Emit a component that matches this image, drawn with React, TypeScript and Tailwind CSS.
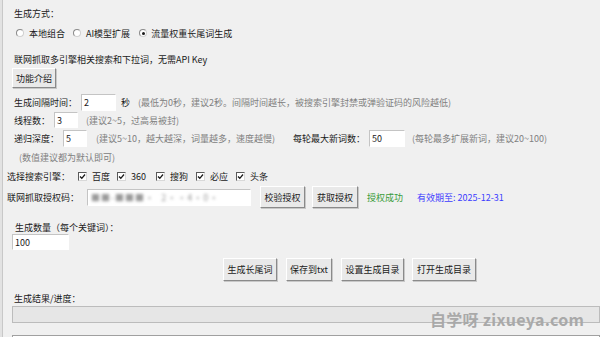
import React from "react";

const FONT = { fontFamily: '"Noto Sans CJK SC", "Noto Sans", sans-serif' };

function Radio({ checked }: { checked?: boolean }) {
  return (
    <span className="relative inline-block w-[8px] h-[8px] rounded-full bg-white border border-[#8a8a8a] border-b-[#d0d0d0] border-r-[#d0d0d0] shrink-0">
      {checked && <span className="absolute left-[2px] top-[2px] w-[3px] h-[3px] rounded-full bg-[#1a1a1a]" />}
    </span>
  );
}

function Check() {
  return (
    <span className="inline-flex items-center justify-center w-[9px] h-[9px] bg-white border border-[#5a5a5a] border-b-[#d8d8d8] border-r-[#d8d8d8] shrink-0">
      <svg width="7" height="7" viewBox="0 0 7 7">
        <path d="M1 3.5 L2.8 5.3 L6 1.5" fill="none" stroke="#1a1a1a" strokeWidth="1.3" />
      </svg>
    </span>
  );
}

function Btn({ w, h = 22, children }: { w: number; h?: number; children: React.ReactNode }) {
  return (
    <div
      className="flex items-center justify-center bg-[#e9e9e9] border border-t-white border-l-white border-r-[#8a8a8a] border-b-[#8a8a8a] shadow-[1px_1px_0_#c8c8c8] text-[9px] text-[#1a1a1a] shrink-0 whitespace-nowrap"
      style={{ width: w, height: h }}
    >
      {children}
    </div>
  );
}

function Input({ w, h = 17, value }: { w: number; h?: number; value?: string }) {
  return (
    <div
      className="flex items-center bg-white border border-[#c4c4c4] border-b-white border-r-white pl-[2px] text-[9px] text-[#1a1a1a] shrink-0"
      style={{ width: w, height: h }}
    >
      {value}
    </div>
  );
}

export default function App() {
  return (
    <div className="relative w-[600px] h-[337px] bg-[#f0f0f0] overflow-hidden flex leading-none text-[9px] text-[#1a1a1a] whitespace-nowrap" style={FONT}>
      <div className="w-[3px] h-full bg-[#e2e2e2] border-r border-[#c8c8c8] shrink-0" />
      <div className="flex flex-col flex-1 pt-[7px] -ml-[4px] [&>*]:shrink-0">
        <div className="h-[12px] flex items-center ml-[15px]">生成方式：</div>
        <div className="h-[12px] mt-[8px] flex items-center ml-[17px]">
          <Radio />
          <span className="ml-[5px]">本地组合</span>
          <span className="ml-[8px] flex"><Radio /></span>
          <span className="ml-[5px]">AI模型扩展</span>
          <span className="ml-[9px] flex"><Radio checked /></span>
          <span className="ml-[4px]">流量权重长尾词生成</span>
        </div>
        <div className="h-[12px] mt-[14px] flex items-center ml-[15px]">联网抓取多引擎相关搜索和下拉词，无需API Key</div>
        <div className="mt-[3px] ml-[13px] flex">
          <Btn w={44} h={20}>功能介绍</Btn>
        </div>
        <div className="h-[17px] mt-[6px] flex items-center ml-[15px]">
          <span className="w-[67px]">生成间隔时间：</span>
          <Input w={35} value="2" />
          <span className="ml-[5px]">秒</span>
          <span className="ml-[8px] text-[#808080]">(最低为0秒，建议2秒。间隔时间越长，被搜索引擎封禁或弹验证码的风险越低)</span>
        </div>
        <div className="h-[16px] mt-[1px] flex items-center ml-[15px]">
          <span className="w-[40px]">线程数：</span>
          <Input w={24} h={16} value="3" />
          <span className="ml-[8px] text-[#808080]">(建议2~5，过高易被封)</span>
        </div>
        <div className="h-[17px] mt-[2px] flex items-center ml-[15px]">
          <span className="w-[49px]">递归深度：</span>
          <Input w={24} value="5" />
          <span className="ml-[9px] w-[197px] text-[#808080]">(建议5~10，越大越深，词量越多，速度越慢)</span>
          <span className="w-[76px]">每轮最大新词数：</span>
          <Input w={36} value="50" />
          <span className="ml-[7px] text-[#808080]">(每轮最多扩展新词，建议20~100)</span>
        </div>
        <div className="h-[12px] mt-[4px] flex items-center ml-[20px] text-[#808080]">(数值建议都为默认即可)</div>
        <div className="h-[12px] mt-[7px] flex items-center ml-[8px]">
          <span className="w-[71px]">选择搜索引擎：</span>
          <Check />
          <span className="ml-[5px]">百度</span>
          <span className="ml-[7px] flex"><Check /></span>
          <span className="ml-[5px]">360</span>
          <span className="ml-[10px] flex"><Check /></span>
          <span className="ml-[5px]">搜狗</span>
          <span className="ml-[8px] flex"><Check /></span>
          <span className="ml-[5px]">必应</span>
          <span className="ml-[8px] flex"><Check /></span>
          <span className="ml-[5px]">头条</span>
        </div>
        <div className="h-[22px] mt-[4px] flex items-center ml-[8px]">
          <span className="w-[80px]">联网抓取授权码：</span>
          <div className="flex items-center bg-white border border-[#c4c4c4] border-b-white border-r-white w-[164px] h-[17px] pl-[3px] shrink-0 overflow-hidden">
            <span className="blur-[1.5px] text-[#9a9a9a] tracking-[1px]">■■-■■■·&nbsp;&nbsp;2··4·0·</span>
          </div>
          <span className="ml-[9px] flex"><Btn w={45}>校验授权</Btn></span>
          <span className="ml-[7px] flex"><Btn w={46}>获取授权</Btn></span>
          <span className="ml-[9px] text-[#3a9c3a]">授权成功</span>
          <span className="ml-[14px] text-[#3d3dff]">有效期至: 2025-12-31</span>
        </div>
        <div className="h-[12px] mt-[13px] flex items-center ml-[16px]">生成数量（每个关键词）：</div>
        <div className="mt-[1px] ml-[13px] flex">
          <Input w={57} h={16} value="100" />
        </div>
        <div className="h-[23px] mt-[8px] flex items-center ml-[224px]">
          <Btn w={54} h={23}>生成长尾词</Btn>
          <span className="ml-[9px] flex"><Btn w={46} h={23}>保存到txt</Btn></span>
          <span className="ml-[9px] flex"><Btn w={63} h={23}>设置生成目录</Btn></span>
          <span className="ml-[8px] flex"><Btn w={64} h={23}>打开生成目录</Btn></span>
        </div>
        <div className="h-[12px] mt-[11px] flex items-center ml-[15px]">生成结果/进度：</div>
        <div className="h-[17px] mt-[2px] ml-[13px] bg-[#e6e6e6] border border-[#bcbcbc]" />
        <div className="h-[20px] mt-[12px] ml-[13px] bg-white border border-[#a0a0a0]" />
      </div>
      <div
        className="absolute left-[430px] top-[311px] text-[16px] font-bold text-[#a9a9a9] tracking-[0.3px] leading-none whitespace-nowrap"
        style={{ fontFamily: '"Noto Sans CJK SC", "Open Sans", sans-serif' }}
      >
        自学呀 zixueya.com
      </div>
    </div>
  );
}
